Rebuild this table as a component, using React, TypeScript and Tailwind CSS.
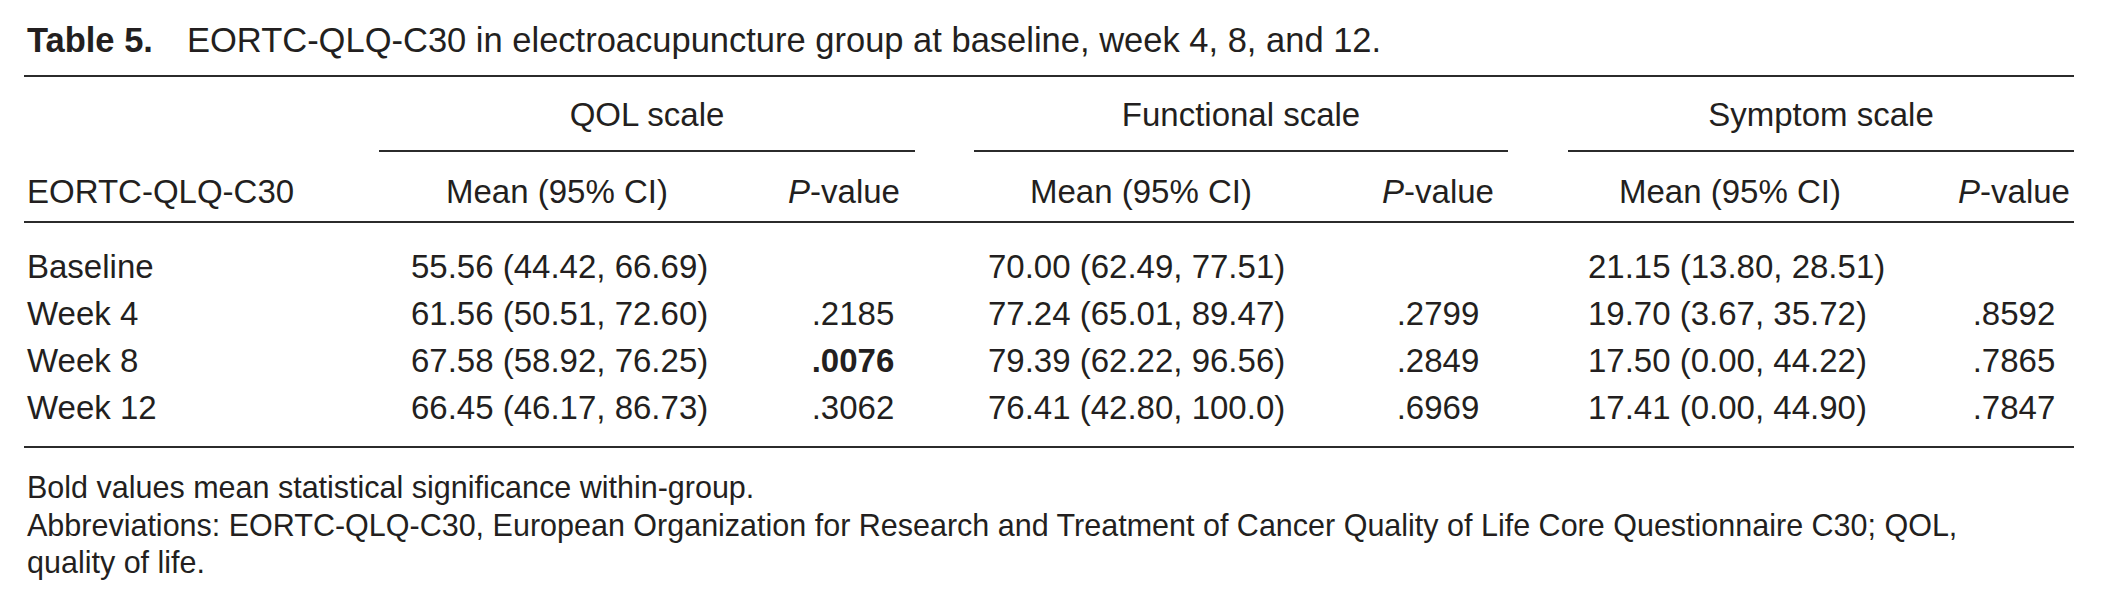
import type { ReactNode } from "react";

type Row = {
	label: string;
	cells: string[];
	bold?: number;
};

const rows: Row[] = [
	{
		label: "Baseline",
		cells: ["55.56 (44.42, 66.69)", "", "70.00 (62.49, 77.51)", "", "21.15 (13.80, 28.51)", ""],
	},
	{
		label: "Week 4",
		cells: ["61.56 (50.51, 72.60)", ".2185", "77.24 (65.01, 89.47)", ".2799", "19.70 (3.67, 35.72)", ".8592"],
	},
	{
		label: "Week 8",
		cells: ["67.58 (58.92, 76.25)", ".0076", "79.39 (62.22, 96.56)", ".2849", "17.50 (0.00, 44.22)", ".7865"],
		bold: 1,
	},
	{
		label: "Week 12",
		cells: ["66.45 (46.17, 86.73)", ".3062", "76.41 (42.80, 100.0)", ".6969", "17.41 (0.00, 44.90)", ".7847"],
	},
];

// one grid template for every row so the columns line up
const grid = "grid grid-cols-[355px_356px_218px_376px_218px_366px_161px]";

// body cell alignment per data column (means left, p-values centred)
const cellCls = [
	"pl-[32px]",
	"text-center pl-[18px]",
	"pl-[35px]",
	"text-center",
	"pl-[41px]",
	"text-center pl-[41px]",
];

const headCls = [
	"text-center",
	"text-center",
	"text-center",
	"text-center",
	"text-center",
	"text-center pl-[41px]",
];

function PValue() {
	return (
		<>
			<i>P</i>-value
		</>
	);
}

function Spanner({ label, className }: { label: string; className: string }) {
	return (
		<div className="col-span-2 flex flex-col">
			<div className={`pt-[18px] pb-[15px] text-center leading-[40px] ${className}`}>
				{label}
			</div>
			<div className={`border-b-2 border-[#2b2b2b] ${className}`} />
		</div>
	);
}

function HeadCell({ children, className }: { children: ReactNode; className: string }) {
	return <div className={`leading-[40px] ${className}`}>{children}</div>;
}

export default function App() {
	return (
		<div
			className="w-[2101px] h-[613px] bg-white pl-[24px] pr-[27px] pt-[17px] text-[#231f20]"
			style={{ fontFamily: '"Liberation Sans", Arial, sans-serif' }}
		>
			<div className="whitespace-nowrap pl-[3px] text-[34.5px] leading-[46px]">
				<span className="inline-block w-[160px] font-bold">Table 5.</span>
				EORTC-QLQ-C30 in electroacupuncture group at baseline, week 4, 8, and 12.
			</div>

			<div className="mt-[12px] border-t-2 border-[#2b2b2b] text-[33px]">
				{/* spanner row */}
				<div className={grid}>
					<div />
					<Spanner label="QOL scale" className="mr-[38px]" />
					<Spanner label="Functional scale" className="ml-[21px] mr-[39px]" />
					<Spanner label="Symptom scale" className="ml-[21px]" />
				</div>

				{/* column headings */}
				<div className={`${grid} border-b-2 border-[#2b2b2b] pt-[20px] pb-[9px] whitespace-nowrap`}>
					<HeadCell className="pl-[3px]">EORTC-QLQ-C30</HeadCell>
					{[0, 1, 2, 3, 4, 5].map((i) => (
						<HeadCell key={i} className={headCls[i]}>
							{i % 2 === 0 ? "Mean (95% CI)" : <PValue />}
						</HeadCell>
					))}
				</div>

				<div className="border-b-2 border-[#2b2b2b] pt-[20px] pb-[15px]">
					{rows.map((row) => (
						<div key={row.label} className={`${grid} leading-[47px] whitespace-nowrap`}>
							<div className="pl-[3px]">{row.label}</div>
							{row.cells.map((c, i) => (
								<div
									key={i}
									className={`${cellCls[i]} ${row.bold === i ? "font-bold" : ""}`}
								>
									{c}
								</div>
							))}
						</div>
					))}
				</div>
			</div>

			<div className="mt-[21px] whitespace-nowrap pl-[3px] text-[30.5px] leading-[37.5px]">
				<div>Bold values mean statistical significance within-group.</div>
				<div>
					Abbreviations: EORTC-QLQ-C30, European Organization for Research and
					Treatment of Cancer Quality of Life Core Questionnaire C30; QOL,
				</div>
				<div>quality of life.</div>
			</div>
		</div>
	);
}
